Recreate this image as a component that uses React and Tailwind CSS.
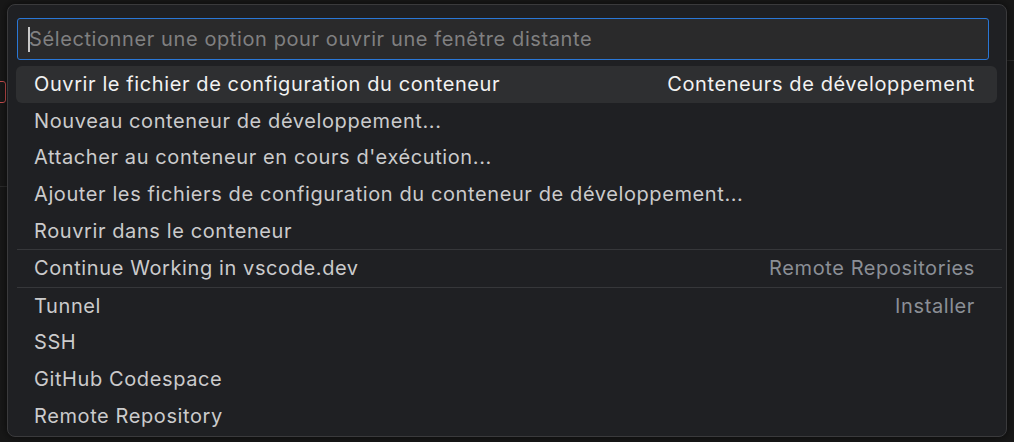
const ROWS = [
  { label: 'Ouvrir le fichier de configuration du conteneur', detail: 'Conteneurs de développement', active: true },
  { label: 'Nouveau conteneur de développement...' },
  { label: "Attacher au conteneur en cours d'exécution..." },
  { label: 'Ajouter les fichiers de configuration du conteneur de développement...' },
  { label: 'Rouvrir dans le conteneur' },
  { label: 'Continue Working in vscode.dev', detail: 'Remote Repositories', sep: true },
  { label: 'Tunnel', detail: 'Installer', sep: true },
  { label: 'SSH' },
  { label: 'GitHub Codespace' },
  { label: 'Remote Repository' },
]

export default function App() {
  return (
    <div
      className="relative w-[1014px] h-[442px] overflow-hidden bg-[#181818] pt-[4px] pl-[7px] tracking-[0.6px]"
      style={{ fontFamily: 'Inter, "Noto Sans", sans-serif' }}
    >
      {/* bits of the editor behind the overlay */}
      <div className="absolute left-[-4px] top-[81px] w-[10px] h-[22px] rounded-[3px] border border-[#c74e4e]" />
      <div className="absolute left-0 top-[186px] w-[7px] border-t border-[#2b2b2b]" />
      <div className="absolute right-0 top-[60px] w-[8px] border-t border-[#2b2b2b]" />

      <div className="relative w-[1000px] h-[433px] rounded-[8px] border border-[#3a3a3c] bg-[#1f2023] shadow-[0_0_8px_rgba(0,0,0,0.6)]">
        <div className="pt-[13px] pl-[9px] pr-[17px]">
          <div className="flex items-center h-[42px] rounded-[3px] border border-[#2a77d6] bg-[#2a2a2b] pl-[10px]">
            <span className="w-[2px] h-[25px] bg-[#c8c8c8] mr-[-1px]" />
            <span className="text-[20px] text-[#808081]">Sélectionner une option pour ouvrir une fenêtre distante</span>
          </div>
        </div>

        <div className="mt-[6px] flex flex-col">
          {ROWS.map((r) => (
            <div key={r.label} className={r.sep ? 'border-t border-[#36373a] ml-[9px] mr-[4px]' : ''}>
              <div
                className={
                  'flex items-center justify-between h-[36.6px] pl-[18px] pr-[22px] text-[20px] ' +
                  (r.sep ? 'ml-[-1px] mr-[5px] h-[35.6px] ' : 'ml-[8px] mr-[9px] ') +
                  (r.active ? 'rounded-[6px] bg-[#2e2f31] text-[#f2f2f2]' : 'text-[#cbcbcc]')
                }
              >
                <span>{r.label}</span>
                {r.detail && (
                  <span className={r.active ? 'text-[#f2f2f2]' : 'text-[#8b8f96]'}>{r.detail}</span>
                )}
              </div>
            </div>
          ))}
        </div>
      </div>
    </div>
  )
}
